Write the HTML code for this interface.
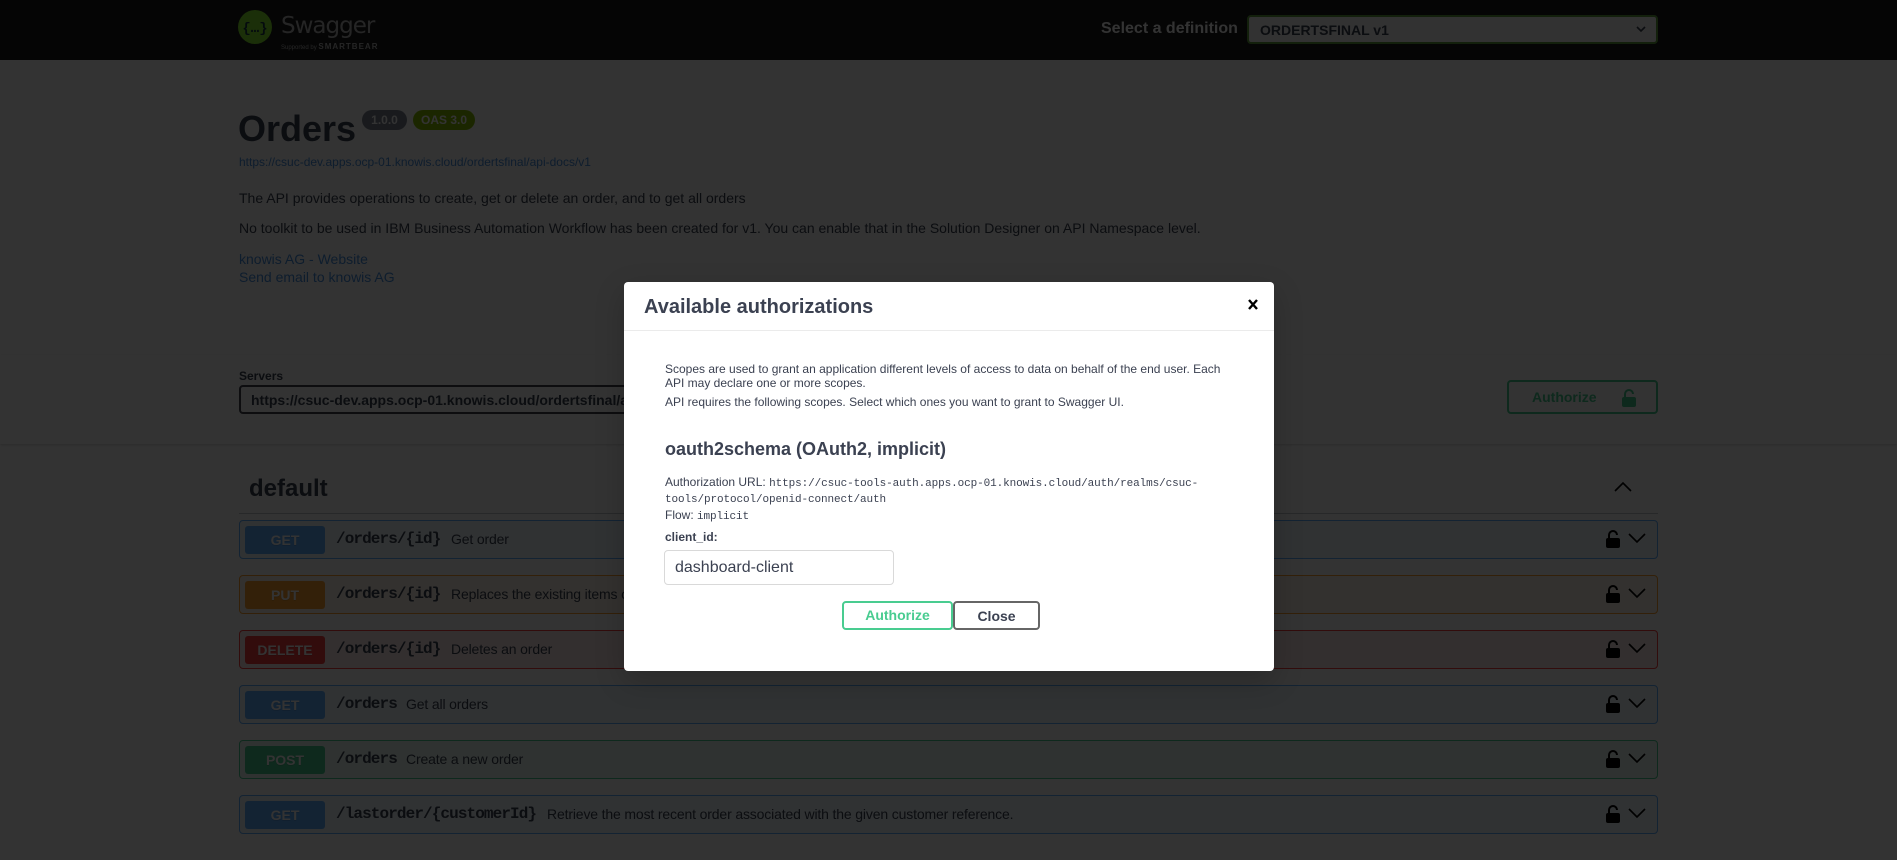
<!DOCTYPE html>
<html><head><meta charset="utf-8">
<style>
*{box-sizing:border-box;margin:0;padding:0}
body{width:1897px;height:860px;overflow:hidden;background:#fff;font-family:"Liberation Sans",Arial,sans-serif;color:#3b4151;position:relative}
.abs{position:absolute}
.top{left:0;top:0;width:1897px;height:60px;background:#1b1b1b}
.mono{font-family:"Liberation Mono","DejaVu Sans Mono",monospace}
.op{position:absolute;left:239px;width:1419px;height:39px;border:1px solid;border-radius:4px}
.op .m{position:absolute;left:5px;top:5px;width:80px;height:28px;border-radius:3px;color:#fff;font-weight:bold;font-size:14px;text-align:center;line-height:28px;text-shadow:0 1px 0 rgba(0,0,0,.1)}
.op .p{position:absolute;left:96px;top:9px;font-family:"Liberation Mono","DejaVu Sans Mono",monospace;font-weight:bold;font-size:16px;letter-spacing:-0.9px;color:#3b4151}
.op .d{position:absolute;top:10px;font-size:14px;color:#3b4151;letter-spacing:-0.15px}
.op .lk{position:absolute;right:36px;top:8px}
.op .ch{position:absolute;right:10px;top:11px}
.overlay{left:0;top:0;width:1897px;height:860px;background:rgba(0,0,0,.8)}
.modal{left:624px;top:282px;width:650px;height:389px;background:#fff;border-radius:4px;box-shadow:0 10px 30px rgba(0,0,0,.2)}
.modal .t{position:absolute;font-size:14px;color:#3b4151}
</style></head><body>
<div class="abs top">
  <svg class="abs" style="left:238px;top:10px" width="34" height="34" viewBox="0 0 34 34"><circle cx="17" cy="17" r="17" fill="#85ea2d"/><text x="17" y="22" text-anchor="middle" font-family="Liberation Mono,monospace" font-weight="bold" font-size="14" fill="#173647">{…}</text></svg>
  <div class="abs" style="left:281px;top:13px;font-size:23px;color:#bbb;font-family:'DejaVu Sans',sans-serif;letter-spacing:-1px">Swagger</div>
  <div class="abs" style="left:281px;top:42px;font-size:6px;color:#bbb">Supported by <b style="font-size:8px;letter-spacing:1px">SMARTBEAR</b></div>
  <div class="abs" style="left:1101px;top:20px;font-size:16px;font-weight:bold;color:#fff">Select a definition</div>
  <div class="abs" style="left:1247px;top:15px;width:411px;height:29px;background:#f7f7f7;border:2px solid #62a03f;border-radius:4px">
    <div class="abs" style="left:11px;top:5px;font-size:14px;font-weight:bold;color:#3b4151">ORDERTSFINAL v1</div>
    <svg class="abs" style="right:10px;top:8px" width="10" height="8" viewBox="0 0 10 8"><path d="M1 2l4 4 4-4" stroke="#3b4151" stroke-width="1.6" fill="none"/></svg>
  </div>
</div>

<div class="abs" style="left:238px;top:108px;font-size:36px;font-weight:bold;color:#3b4151">Orders</div>
<div class="abs" style="left:362px;top:110px;width:45px;height:20px;background:#7d8492;border-radius:57px;color:#fff;font-size:12px;font-weight:bold;text-align:center;line-height:20px">1.0.0</div>
<div class="abs" style="left:413px;top:110px;width:62px;height:20px;background:#89bf04;border-radius:57px;color:#fff;font-size:12px;font-weight:bold;text-align:center;line-height:20px">OAS 3.0</div>
<div class="abs" style="left:239px;top:155px;font-size:12px;color:#4990e2">https://csuc-dev.apps.ocp-01.knowis.cloud/ordertsfinal/api-docs/v1</div>
<div class="abs" style="left:239px;top:190px;font-size:14px">The API provides operations to create, get or delete an order, and to get all orders</div>
<div class="abs" style="left:239px;top:220px;font-size:14px">No toolkit to be used in IBM Business Automation Workflow has been created for v1. You can enable that in the Solution Designer on API Namespace level.</div>
<div class="abs" style="left:239px;top:251px;font-size:14px;color:#4990e2">knowis AG - Website</div>
<div class="abs" style="left:239px;top:269px;font-size:14px;color:#4990e2">Send email to knowis AG</div>

<div class="abs" style="left:0;top:355px;width:1897px;height:89px;background:#fff;box-shadow:0 1px 2px 0 rgba(0,0,0,.15)"></div>
<div class="abs" style="left:239px;top:369px;font-size:12px;font-weight:bold">Servers</div>
<div class="abs" style="left:239px;top:385px;width:420px;height:29px;border:2px solid #41444e;border-radius:4px;font-size:14px;font-weight:bold;padding:5px 10px;white-space:nowrap;overflow:hidden">https://csuc-dev.apps.ocp-01.knowis.cloud/ordertsfinal/api</div>
<div class="abs" style="left:1507px;top:380px;width:151px;height:34px;border:2px solid #49cc90;border-radius:4px">
  <div class="abs" style="left:23px;top:7px;font-size:14px;font-weight:bold;color:#49cc90">Authorize</div>
  <svg class="abs" style="left:112px;top:6px" width="16" height="20" viewBox="0 0 16 20"><path d="M4 9V6a4 4 0 0 1 8 0" stroke="#49cc90" stroke-width="2" fill="none"/><rect x="1" y="9" width="14" height="10" rx="2" fill="#49cc90"/></svg>
</div>

<div class="abs" style="left:249px;top:475px;font-size:24px;font-weight:bold">default</div>
<svg class="abs" style="left:1613px;top:481px" width="20" height="12" viewBox="0 0 20 12"><path d="M2 10l8-8 8 8" stroke="#000" stroke-width="1.6" fill="none"/></svg>
<div class="abs" style="left:239px;top:513px;width:1419px;height:1px;background:rgba(59,65,81,.3)"></div>

<div class="op" style="top:520px;background:rgba(97,175,254,.1);border-color:#61affe"><div class="m" style="background:#61affe">GET</div><div class="p">/orders/{id}</div><div class="d" style="left:211px">Get order</div><svg class="lk" width="16" height="20" viewBox="0 0 16 20"><path d="M4 9V6a4 4 0 0 1 8 0" stroke="#000" stroke-width="2" fill="none"/><rect x="1" y="9" width="14" height="10" rx="2"/></svg><svg class="ch" width="20" height="12" viewBox="0 0 20 12"><path d="M2 2l8 8 8-8" stroke="#000" stroke-width="1.6" fill="none"/></svg></div>
<div class="op" style="top:575px;background:rgba(252,161,48,.1);border-color:#fca130"><div class="m" style="background:#fca130">PUT</div><div class="p">/orders/{id}</div><div class="d" style="left:211px">Replaces the existing items of the order</div><svg class="lk" width="16" height="20" viewBox="0 0 16 20"><path d="M4 9V6a4 4 0 0 1 8 0" stroke="#000" stroke-width="2" fill="none"/><rect x="1" y="9" width="14" height="10" rx="2"/></svg><svg class="ch" width="20" height="12" viewBox="0 0 20 12"><path d="M2 2l8 8 8-8" stroke="#000" stroke-width="1.6" fill="none"/></svg></div>
<div class="op" style="top:630px;background:rgba(249,62,62,.1);border-color:#f93e3e"><div class="m" style="background:#f93e3e">DELETE</div><div class="p">/orders/{id}</div><div class="d" style="left:211px">Deletes an order</div><svg class="lk" width="16" height="20" viewBox="0 0 16 20"><path d="M4 9V6a4 4 0 0 1 8 0" stroke="#000" stroke-width="2" fill="none"/><rect x="1" y="9" width="14" height="10" rx="2"/></svg><svg class="ch" width="20" height="12" viewBox="0 0 20 12"><path d="M2 2l8 8 8-8" stroke="#000" stroke-width="1.6" fill="none"/></svg></div>
<div class="op" style="top:685px;background:rgba(97,175,254,.1);border-color:#61affe"><div class="m" style="background:#61affe">GET</div><div class="p">/orders</div><div class="d" style="left:166px">Get all orders</div><svg class="lk" width="16" height="20" viewBox="0 0 16 20"><path d="M4 9V6a4 4 0 0 1 8 0" stroke="#000" stroke-width="2" fill="none"/><rect x="1" y="9" width="14" height="10" rx="2"/></svg><svg class="ch" width="20" height="12" viewBox="0 0 20 12"><path d="M2 2l8 8 8-8" stroke="#000" stroke-width="1.6" fill="none"/></svg></div>
<div class="op" style="top:740px;background:rgba(73,204,144,.1);border-color:#49cc90"><div class="m" style="background:#49cc90">POST</div><div class="p">/orders</div><div class="d" style="left:166px">Create a new order</div><svg class="lk" width="16" height="20" viewBox="0 0 16 20"><path d="M4 9V6a4 4 0 0 1 8 0" stroke="#000" stroke-width="2" fill="none"/><rect x="1" y="9" width="14" height="10" rx="2"/></svg><svg class="ch" width="20" height="12" viewBox="0 0 20 12"><path d="M2 2l8 8 8-8" stroke="#000" stroke-width="1.6" fill="none"/></svg></div>
<div class="op" style="top:795px;background:rgba(97,175,254,.1);border-color:#61affe"><div class="m" style="background:#61affe">GET</div><div class="p">/lastorder/{customerId}</div><div class="d" style="left:307px">Retrieve the most recent order associated with the given customer reference.</div><svg class="lk" width="16" height="20" viewBox="0 0 16 20"><path d="M4 9V6a4 4 0 0 1 8 0" stroke="#000" stroke-width="2" fill="none"/><rect x="1" y="9" width="14" height="10" rx="2"/></svg><svg class="ch" width="20" height="12" viewBox="0 0 20 12"><path d="M2 2l8 8 8-8" stroke="#000" stroke-width="1.6" fill="none"/></svg></div>

<div class="abs overlay"></div>

<div class="abs modal">
  <div class="t" style="left:20px;top:14px;font-size:20px;font-weight:bold">Available authorizations</div>
  <svg class="abs" style="left:624px;top:17px" width="10" height="11" viewBox="0 0 10 11"><path d="M1 1l8 9M9 1l-8 9" stroke="#000" stroke-width="2.4"/></svg>
  <div class="abs" style="left:0;top:48px;width:650px;height:1px;background:#ebebeb"></div>
  <div class="t" style="left:41px;top:80px;font-size:12px;line-height:14px;width:560px">Scopes are used to grant an application different levels of access to data on behalf of the end user. Each API may declare one or more scopes.</div>
  <div class="t" style="left:41px;top:113px;font-size:12px">API requires the following scopes. Select which ones you want to grant to Swagger UI.</div>
  <div class="t" style="left:41px;top:157px;font-size:18px;font-weight:bold">oauth2schema (OAuth2, implicit)</div>
  <div class="t" style="left:41px;top:193px;font-size:12px;line-height:14px;width:600px">Authorization URL: <span class="mono" style="font-size:11px;letter-spacing:-0.1px">https://csuc-tools-auth.apps.ocp-01.knowis.cloud/auth/realms/csuc-<br>tools/protocol/openid-connect/auth</span></div>
  <div class="t" style="left:41px;top:226px;font-size:12px">Flow: <span class="mono" style="font-size:11px;letter-spacing:-0.1px">implicit</span></div>
  <div class="t" style="left:41px;top:248px;font-size:12px;font-weight:bold">client_id:</div>
  <div class="abs" style="left:40px;top:268px;width:230px;height:35px;border:1px solid #d9d9d9;border-radius:4px;font-size:16px;padding:8px 10px;color:#3b4151">dashboard-client</div>
  <div class="abs" style="left:218px;top:319px;width:111px;height:29px;border:2px solid #49cc90;border-radius:4px;font-size:14px;font-weight:bold;color:#49cc90;text-align:center;line-height:25px">Authorize</div>
  <div class="abs" style="left:329px;top:319px;width:87px;height:29px;border:2px solid #666;border-radius:4px;font-size:14px;font-weight:bold;color:#3b4151;text-align:center;line-height:27px">Close</div>
</div>
</body></html>
